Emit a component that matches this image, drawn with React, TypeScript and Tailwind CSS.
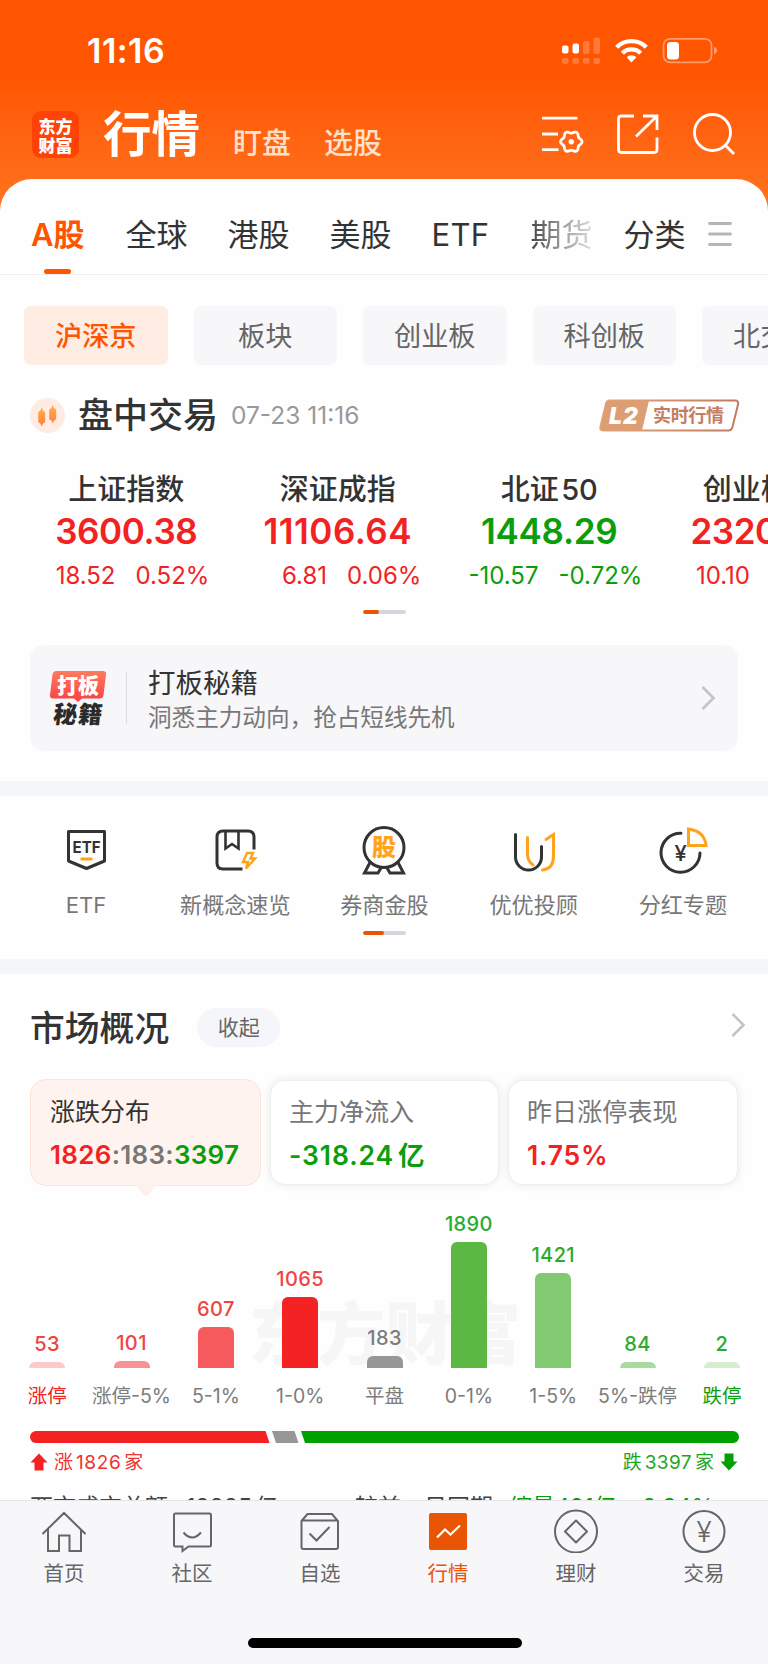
import React from "react";
import clsx from "clsx";

const RED = "text-[#f32222]";
const GREEN = "text-[#0a9f0a]";

const chips = ["沪深京", "板块", "创业板", "科创板", "北交所"];

const indices = [
    { name: "上证指数", value: "3600.38", change: "18.52", percent: "0.52%", up: true, tracking: "tracking-[-0.4px]" },
    { name: "深证成指", value: "11106.64", change: "6.81", percent: "0.06%", up: true, tracking: "tracking-[0.5px]" },
    { name: "北证\u200a50", value: "1448.29", change: "-10.57", percent: "-0.72%", up: false, tracking: "tracking-[-0.3px]" },
    { name: "创业板指", value: "2320.93", change: "10.10", percent: "0.44%", up: true, tracking: "tracking-[-0.4px]" },
];

const bars = [
    { count: 53, label: "涨停", height: 6, bar: "bg-[#fccaca]", text: "text-[#ee4444]", labelColor: "text-[#f32222]" },
    { count: 101, label: "涨停-5%", height: 7, bar: "bg-[#f89393]", text: "text-[#ee4444]", labelColor: "text-[#7c7c7c]" },
    { count: 607, label: "5-1%", height: 41, bar: "bg-[#f75a5c]", text: "text-[#ee4444]", labelColor: "text-[#7c7c7c]" },
    { count: 1065, label: "1-0%", height: 71, bar: "bg-[#f42222]", text: "text-[#ee4444]", labelColor: "text-[#7c7c7c]" },
    { count: 183, label: "平盘", height: 12, bar: "bg-[#979797]", text: "text-[#7c7c7c]", labelColor: "text-[#7c7c7c]" },
    { count: 1890, label: "0-1%", height: 126, bar: "bg-[#5bb843]", text: "text-[#2bab2b]", labelColor: "text-[#7c7c7c]" },
    { count: 1421, label: "1-5%", height: 95, bar: "bg-[#82ca72]", text: "text-[#2bab2b]", labelColor: "text-[#7c7c7c]" },
    { count: 84, label: "5%-跌停", height: 6, bar: "bg-[#a9daa0]", text: "text-[#2bab2b]", labelColor: "text-[#7c7c7c]" },
    { count: 2, label: "跌停", height: 6, bar: "bg-[#d5eed0]", text: "text-[#2bab2b]", labelColor: "text-[#0a9f0a]" },
];

// six soft teeth around the centre
const gearPoints = Array.from({ length: 72 }, (_, i) => {
    const a = (i * 5 * Math.PI) / 180;
    const r = 9.6 + 1.1 * Math.cos(6 * a);
    return `${(30.3 + r * Math.cos(a)).toFixed(2)},${(26.7 + r * Math.sin(a)).toFixed(2)}`;
}).join(" ");

const StatusBar = () => (
    <div className="flex h-[102px] items-center pl-[87px] pr-[50px] text-white">
        <div className="text-[34px] font-semibold leading-none tracking-[0.5px]">11:16</div>
        <svg className="ml-auto" width="156" height="28" viewBox="0 0 156 28" fill="white">
            <rect x="0" y="8.5" width="6.5" height="8" rx="2" />
            <rect x="10.5" y="6.5" width="6.5" height="10" rx="2" />
            <g opacity="0.22">
                <rect x="21" y="4" width="6.5" height="13" rx="2" />
                <rect x="31.5" y="0.5" width="6.5" height="16.5" rx="2" />
                <rect x="0" y="21" width="6.5" height="6" rx="2" />
                <rect x="10.5" y="21" width="6.5" height="6" rx="2" />
                <rect x="21" y="21" width="6.5" height="6" rx="2" />
                <rect x="31.5" y="21" width="6.5" height="6" rx="2" />
            </g>
            <g fill="none" stroke="white" strokeWidth="4.4">
                <path d="M54.7 10.2 a21 21 0 0 1 29.6 0" />
                <path d="M60.3 16.2 a13 13 0 0 1 18.4 0" />
            </g>
            <path d="M64.6 20.3 a7 7 0 0 1 9.8 0 L69.5 25.6 Z" />
            <rect x="101.5" y="1.8" width="48" height="23.5" rx="6.5" fill="none" stroke="white" strokeOpacity="0.42" strokeWidth="1.8" />
            <rect x="105" y="5" width="12" height="17.5" rx="3.5" />
            <path d="M152 10 v7 q3 -1 3 -3.500 q0 -2.500 -3 -3.500" opacity="0.45" />
        </svg>
    </div>
);

const TopNav = () => (
    <div className="flex h-[77px] items-end pb-[21px] pl-8 pr-8 text-white">
        <div className="flex h-[47px] w-[47px] flex-col items-center justify-center rounded-[9px] bg-[#ff4206] font-['Noto_Sans_CJK_SC'] text-[17px] font-black leading-[19px]">
            <span>东方</span>
            <span>财富</span>
        </div>
        <div className="ml-[24px] text-[48.5px] font-bold leading-[46px]">行情</div>
        <div className="ml-[33px] text-[29px] font-medium leading-[29px] text-[#ffe0cd]">盯盘</div>
        <div className="ml-[33px] text-[29px] font-medium leading-[29px] text-[#ffe0cd]">选股</div>
        <svg className="mb-[1px] ml-auto" width="195" height="44" viewBox="0 0 195 44" fill="none" stroke="white" strokeWidth="2.8">
            <g transform="translate(0 2)">
                <path d="M1 3.200 H36.500 M1 19 H17 M1 34.700 H17.500" />
                <polygon points={gearPoints} />
                <circle cx="30.3" cy="26.700" r="2.7" fill="white" stroke="none" />
            </g>
            <path d="M93 3 H80.500 q-3 0 -3 3 V36.500 q0 3 3 3 H113 q3 0 3 -3 V24.500 M102 3 H116 V17 M116 3 L95 23.500" />
            <circle cx="171.500" cy="19.500" r="18" />
            <path d="M184 32 L193 41" />
        </svg>
    </div>
);

const MarketTabs = () => (
    <div className="flex h-24 border-b border-[#f0f0f2] pl-[31px] pt-10 text-[31px] leading-[31px] text-[#333]">
        <div className="flex flex-col items-center font-semibold text-[#ff5500]">
            <span>A股</span>
            <span className="mt-[19px] h-[5px] w-[27px] rounded-full bg-[#ff5500]" />
        </div>
        <div className="ml-[41px]">全球</div>
        <div className="ml-[40px]">港股</div>
        <div className="ml-[40px]">美股</div>
        <div className="ml-[40px] tracking-[0.3px]">ETF</div>
        <div className="ml-[41px] bg-linear-to-r from-[#444] via-[#999] to-[#ddd] bg-clip-text text-transparent">期货</div>
        <div className="ml-[31px]">分类</div>
        <svg className="ml-[23px] mt-[2px]" width="24" height="26" stroke="#b5b5b5" strokeWidth="2.8" strokeLinecap="round">
            <path d="M1.500 2.500 H22.500 M1.500 13 H22.500 M1.500 23.500 H22.500" />
        </svg>
    </div>
);

const Pager = ({ className }: { className: string }) => (
    <div className="mx-auto h-1 w-[43px] overflow-hidden rounded-full bg-[#d5d6dd]">
        <div className={clsx("h-full rounded-full bg-[#ea5504]", className)} />
    </div>
);

const Chevron = () => (
    <svg width="15" height="26" fill="none" stroke="#c4c4c6" strokeWidth="2.6">
        <path d="M1.500 2 L12.500 13 L1.500 24" />
    </svg>
);

const TradingHeader = () => (
    <div className="flex h-[100px] items-center pl-[30px] pr-[28px]">
        <svg width="35" height="35">
            <defs>
                <linearGradient id="candle" x1="0" y1="0" x2="0" y2="1">
                    <stop offset="0" stopColor="#ffb04f" />
                    <stop offset="1" stopColor="#ff8040" />
                </linearGradient>
            </defs>
            <circle cx="17.500" cy="17.500" r="17.500" fill="#feebe2" />
            <g fill="url(#candle)">
                <path d="M11.700 9.500 L13 12.500 Q15.200 13 15.200 15 V23 Q15.200 25 13 25.500 L11.700 28.500 L10.400 25.500 Q8.200 25 8.200 23 V15 Q8.200 13 10.400 12.500 Z" />
                <path d="M22.700 7 L24 10 Q26.200 10.500 26.200 12.500 V20 Q26.200 22 24 22.500 L22.700 25.500 L21.400 22.500 Q19.200 22 19.200 20 V12.500 Q19.200 10.500 21.400 10 Z" />
            </g>
        </svg>
        <div className="ml-[13px] text-[35px] font-medium leading-none text-[#333]">盘中交易</div>
        <div className="ml-[13px] text-[24.5px] leading-none text-[#999]">07-23 11:16</div>
        <svg className="ml-auto" width="141" height="33">
            <defs>
                <linearGradient id="gold" x1="0" y1="0" x2="1" y2="0">
                    <stop offset="0" stopColor="#e5a878" />
                    <stop offset="1" stopColor="#c07a60" />
                </linearGradient>
            </defs>
            <path d="M10.500 1.500 H136 q4 0 3 4 L133.500 28 q-1 3.500 -4 3.500 H4 q-3.500 0 -2.500 -4 L7 4.500 q1 -3 3.500 -3 Z" fill="none" stroke="url(#gold)" strokeWidth="2" />
            <path d="M10.500 1.500 H50 L43 31.500 H4 q-3.500 0 -2.500 -4 L7 4.500 q1 -3 3.500 -3 Z" fill="#dd9e73" />
            <text x="10" y="25" fontSize="23" fontWeight="900" fontStyle="italic" fill="white" textLength="29">L2</text>
            <text x="54" y="23" fontSize="18" fontWeight="700" fill="#c57d62" textLength="71">实时行情</text>
        </svg>
    </div>
);

const IndexList = () => (
    <div className="flex w-[867px] pl-[20.5px] pt-2">
        {indices.map((item) => (
            <div key={item.name} className={clsx("w-[211.5px] shrink-0", item.up ? RED : GREEN)}>
                <div className="h-[33px] text-center text-[29px] font-medium leading-[33px] text-[#333]">{item.name}</div>
                <div className={clsx("h-[50px] text-center text-[35px] font-semibold leading-[51px]", item.tracking)}>{item.value}</div>
                <div className="grid h-10 grid-cols-[95px_1fr] gap-[20px] text-[24px] leading-[39px]">
                    <span className="whitespace-nowrap text-right">{item.change}</span>
                    <span>{item.percent}</span>
                </div>
            </div>
        ))}
    </div>
);

const Banner = () => (
    <div className="mx-[30px] mt-[31px] flex h-[106px] items-center rounded-[14px] bg-[#f7f7fa] pl-5 pr-[22px]">
        <svg width="57" height="56">
            <defs>
                <linearGradient id="flag" x1="0" y1="0" x2="0" y2="1">
                    <stop offset="0" stopColor="#fb7c5e" />
                    <stop offset="1" stopColor="#fb4040" />
                </linearGradient>
            </defs>
            <path d="M6.500 1 H53 q3.500 0 3 3.500 L53.500 25 q-.500 3.500 -4 3.500 H32 L28 32 L24 28.500 H3 q-3.500 0 -3 -3.500 L2.500 4.500 q.500 -3.500 4 -3.500 Z" fill="url(#flag)" />
            <text x="7" y="23" fontSize="21" fontWeight="900" fill="white">打板</text>
            <text x="3" y="53" fontSize="24" fontWeight="900" fill="#2a2a2a" transform="skewX(-6) translate(5 0)" textLength="49">秘籍</text>
        </svg>
        <div className="ml-[19px] h-[52px] w-px bg-[#dcdce0]" />
        <div className="ml-[21px] flex flex-col pt-[6px]">
            <span className="text-[27.5px] leading-[33px] text-[#333]">打板秘籍</span>
            <span className="text-[23.6px] leading-[35px] text-[#777]">洞悉主力动向，抢占短线先机</span>
        </div>
        <div className="ml-auto">
            <Chevron />
        </div>
    </div>
);

const Feature = ({ label, children }: { label: string; children: React.ReactNode }) => (
    <div className="flex w-[149.2px] flex-col items-center">
        <svg width="48" height="48" fill="none" stroke="#333" strokeWidth="3" className="overflow-visible">
            {children}
        </svg>
        <div className="mt-[10px] h-10 whitespace-nowrap text-[22.1px] leading-10 text-[#777]">{label}</div>
    </div>
);

const Features = () => (
    <div className="h-[163px] pt-[31px]">
        <div className="flex pl-[11.5px]">
            <Feature label="ETF">
                <path d="M6.500 4.500 H42.500 V34 L24.500 41.500 L6.500 34 Z" strokeLinejoin="round" />
                <text x="10.500" y="25.500" fontSize="16.500" fontWeight="700" fill="#333" stroke="none" textLength="28" lengthAdjust="spacingAndGlyphs">ETF</text>
                <path d="M18.500 32 H30.500" stroke="#ffa31f" />
            </Feature>
            <Feature label="新概念速览">
                <path d="M43 22.500 V10 q0 -6 -6 -6 H12 q-6 0 -6 6 V36 q0 6 6 6 H31.500" />
                <path d="M14.500 4 V21.500 L21 17 L27.500 21.500 V4" strokeWidth="2.6" />
                <path d="M36 26 H42 L39.500 31.500 H44 L35 41.500 L37 35 H32 Z" stroke="#ffa31f" strokeWidth="2.4" />
            </Feature>
            <Feature label="券商金股">
                <circle cx="24" cy="20.500" r="20" />
                <path d="M10 35.500 L4.500 46 H18 L21.500 40 M38 35.500 L43.500 46 H30 L26.500 40" />
                <text x="24" y="29" fontSize="24" fontWeight="900" fill="#ffa31f" stroke="none" textAnchor="middle">股</text>
            </Feature>
            <Feature label="优优投顾">
                <g strokeLinecap="round">
                    <path d="M17.500 10.500 V27 q0 7 5.500 11" stroke="#ffa31f" />
                    <path d="M36 12.500 L43.500 7.500 V29 q0 13 -11 14" stroke="#ffa31f" />
                    <path d="M5.500 7.500 V30 a13 13 0 0 0 26 0 V19.500" />
                </g>
            </Feature>
            <Feature label="分红专题">
                <path d="M22 6.200 A19.500 19.500 0 1 0 41 26" strokeLinecap="round" />
                <path d="M29.500 2 V18.500 H47 Q45.500 4 29.500 2 Z" stroke="#ffa31f" />
                <text x="21.500" y="33.500" fontSize="22" fontWeight="500" fill="#333" stroke="none" textAnchor="middle">¥</text>
            </Feature>
        </div>
        <div className="mt-[6px]">
            <Pager className="w-[21px]" />
        </div>
    </div>
);

const OverviewCards = () => (
    <div className="flex h-[107px] items-center gap-[9px] px-[30px] text-[25px] leading-[30px]">
        <div className="relative h-[107px] w-[231px] rounded-[16px] border border-[#fde3d8] bg-[#fef3ee] pl-[19px] pt-[17px]">
            <div className="text-[#333]">涨跌分布</div>
            <div className="mt-[13px] text-[26px] font-semibold leading-[30px] tracking-[0.3px] text-[#777]">
                <span className={RED}>1826</span>:183:<span className={GREEN}>3397</span>
            </div>
            <svg className="absolute left-[101px] top-[105px]" width="28" height="14">
                <path d="M0 0 H28 Q24 0 21 4 L16 10 Q14 12 12 10 L7 4 Q4 0 0 0" fill="#fef0ea" />
            </svg>
        </div>
        <div className="h-[105px] w-[229px] rounded-[15px] border border-[#efefef] bg-white pl-[18px] pt-[16px] shadow-[0_0_10px_rgba(0,0,0,0.09)]">
            <div className="text-[#777]">主力净流入</div>
            <div className={clsx("mt-[13px] text-[26.5px] font-semibold leading-[30px] tracking-[0.9px]", GREEN)}>
                -318.24<span className="ml-[4px]">亿</span>
            </div>
        </div>
        <div className="h-[105px] w-[230px] rounded-[15px] border border-[#efefef] bg-white pl-[18px] pt-[16px] shadow-[0_0_10px_rgba(0,0,0,0.09)]">
            <div className="tracking-[0.1px] text-[#777]">昨日涨停表现</div>
            <div className={clsx("mt-[13px] text-[26.5px] font-semibold leading-[30px] tracking-[0.8px]", RED)}>1.75%</div>
        </div>
    </div>
);

const Distribution = () => (
    <div className="relative">
        <div className="absolute left-[249px] top-[107px] font-['Noto_Sans_CJK_SC'] text-[68px] font-black leading-[74px] text-[#f6f6f6]">东方财富</div>
        <div className="relative flex h-[238px] pl-[5px]">
            {bars.map((item) => (
                <div key={item.label} className="flex w-[84.35px] flex-col items-center justify-end whitespace-nowrap">
                    <div className={clsx("text-[20px] font-medium leading-5 tracking-[0.4px]", item.text)}>{item.count}</div>
                    <div className={clsx("mt-2 w-[36px] rounded-t-[6px]", item.bar)} style={{ height: item.height }} />
                    <div className={clsx("h-14 text-[19.5px] leading-[56px]", item.labelColor)}>{item.label}</div>
                </div>
            ))}
        </div>
        <svg className="ml-[30px] mt-[7px]" width="709" height="12">
            <path d="M6 0 H235.500 L239.500 12 H6 a6 6 0 0 1 0 -12" fill="#f42222" />
            <path d="M242 0 H264.500 L268.500 12 H246 Z" fill="#979797" />
            <path d="M271 0 H703 a6 6 0 0 1 0 12 H275 Z" fill="#00a000" />
        </svg>
        <div className="flex h-[38px] items-center justify-between px-[30px] text-[19px] leading-none">
            <div className="flex items-center gap-[6px] text-[#ee3333]">
                <svg width="18" height="18" fill="#f42222">
                    <path d="M9 0.500 L17.500 9.500 H13.500 V17.500 H4.500 V9.500 H0.500 Z" />
                </svg>
                <span>涨<span className="mx-[3px] tracking-[0.6px]">1826</span>家</span>
            </div>
            <div className="flex items-center gap-[6px] text-[#1fa51f]">
                <span>跌<span className="mx-[3px] tracking-[0.4px]">3397</span>家</span>
                <svg width="18" height="18" fill="#00a000">
                    <path d="M9 17.500 L17.500 8.500 H13.500 V0.500 H4.500 V8.500 H0.500 Z" />
                </svg>
            </div>
        </div>
    </div>
);

const Turnover = () => (
    <div className="flex h-[19px] items-start overflow-hidden whitespace-nowrap pl-[30px] pt-[13px] text-[23px] leading-[26px] text-[#444]">
        <span>两市成交总额</span>
        <span className="ml-[18px]">18885<span className="ml-[3px]">亿</span></span>
        <span className="ml-auto">较前一日同期</span>
        <span className={clsx("ml-4", GREEN)}>缩量491亿</span>
        <span className={clsx("ml-4 mr-[54px]", GREEN)}>-2.34%</span>
    </div>
);

const NavItem = ({ label, active, children }: { label: string; active?: boolean; children: React.ReactNode }) => (
    <div className={clsx("flex flex-1 flex-col items-center", active ? "text-[#ea5504]" : "text-[#666]")}>
        <svg width="44" height="44" fill="none" stroke="currentColor" strokeWidth="2">
            {children}
        </svg>
        <div className="mt-[8px] text-[20.5px] leading-[26px]">{label}</div>
    </div>
);

const BottomNav = () => (
    <div className="flex h-[164px] flex-col border-t border-[#e6e6e8] bg-[#f7f7fa] pt-2">
        <div className="flex">
            <NavItem label="首页">
                <path d="M0.500 25 L22 4 L43.500 25 M6 20 V42 H17 V26.500 H27.500 V42 H39 V20" />
            </NavItem>
            <NavItem label="社区">
                <path d="M5.500 4.500 H39.500 q1.500 0 1.500 1.500 V36 q0 1.500 -1.500 1.500 H18.500 L12.500 42 V37.500 H5.500 q-1.500 0 -1.500 -1.500 V6 q0 -1.500 1.500 -1.500 Z M13.500 23.500 q8.500 10 17.500 0" />
            </NavItem>
            <NavItem label="自选">
                <path d="M3.500 12 L9.500 5 H34 L40 12 V38 q0 2 -2 2 H5.500 q-2 0 -2 -2 Z M3.500 11.500 H40 M11.500 24.500 L18.500 31.500 L31.500 18" />
            </NavItem>
            <NavItem label="行情" active>
                <rect x="3" y="4" width="38" height="37" rx="2" fill="currentColor" stroke="none" />
                <path d="M11 28.500 L19 20.500 L24.500 25.500 L34 16.500" stroke="#fff" strokeWidth="2.2" />
            </NavItem>
            <NavItem label="理财">
                <circle cx="22" cy="22.500" r="21" />
                <path d="M22 11.500 L33 22.500 L22 33.500 L11 22.500 Z" strokeLinejoin="round" />
            </NavItem>
            <NavItem label="交易">
                <circle cx="22" cy="22.500" r="20.500" />
                <text x="22" y="33" fontSize="28" fontWeight="300" fill="currentColor" stroke="none" textAnchor="middle">¥</text>
            </NavItem>
        </div>
        <div className="mb-[16px] ml-[248px] mt-auto h-[10px] w-[274px] rounded-full bg-black" />
    </div>
);

const App = () => {
    return (
        <div className="h-[1664px] w-[768px] overflow-hidden bg-linear-to-b from-[#ff5500] from-[75px] to-[#ff741f] to-[215px] font-[Inter,'Noto_Sans_CJK_SC',sans-serif]">
            <StatusBar />
            <TopNav />
            <div className="h-[1321px] overflow-hidden rounded-t-[32px] bg-[#fefefe]">
                <MarketTabs />
                <div className="mt-[31px] flex gap-[26px] pl-6">
                    {chips.map((chip, i) => (
                        <div
                            key={chip}
                            className={clsx(
                                "h-[59px] w-[143.5px] shrink-0 rounded-[7px] text-center text-[27.2px] leading-[62px]",
                                i === 0 ? "bg-[#ffece3] font-medium text-[#ff5500]" : "bg-[#f7f7fa] text-[#666]"
                            )}
                        >
                            {chip}
                        </div>
                    ))}
                </div>
                <TradingHeader />
                <IndexList />
                <div className="mt-[14px]">
                    <Pager className="w-4" />
                </div>
                <Banner />
                <div className="mt-[30px] h-[15px] bg-[#f5f6f9]" />
                <Features />
                <div className="h-[15px] bg-[#f5f6f9]" />
                <div className="flex h-[105px] items-center pl-[30px] pr-[22px]">
                    <div className="mt-[4px] text-[34.8px] font-medium leading-none text-[#333]">市场概况</div>
                    <div className="ml-[28px] mt-[2px] h-[39px] w-[83px] rounded-full bg-[#f5f6f9] text-center text-[21px] leading-[39px] text-[#666]">收起</div>
                    <div className="mb-[3px] ml-auto">
                        <Chevron />
                    </div>
                </div>
                <OverviewCards />
                <Distribution />
                <Turnover />
            </div>
            <BottomNav />
        </div>
    );
};

export default App;
